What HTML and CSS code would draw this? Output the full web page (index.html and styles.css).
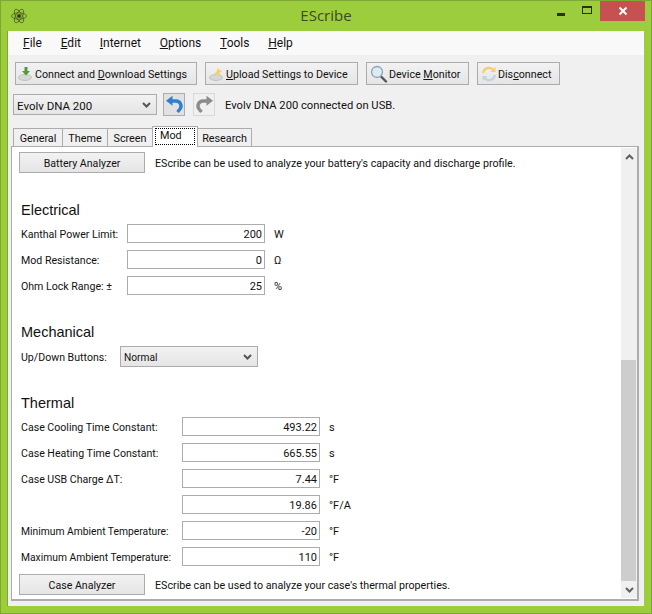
FILE: index.html
```html
<!DOCTYPE html>
<html lang="en">
<head>
    <meta charset="UTF-8">
    <title>EScribe</title>
    <link rel="stylesheet" href="styles.css">
</head>
<body>
<div class="window">
    <!-- title bar -->
    <div class="titlebar">
        <svg class="app-icon" width="18" height="18" viewBox="0 0 18 18" fill="none" stroke="#4a5a24" stroke-width=".8">
            <ellipse cx="9" cy="9" rx="7.5" ry="3.2"/>
            <ellipse cx="9" cy="9" rx="7.5" ry="3.2" transform="rotate(60 9 9)"/>
            <ellipse cx="9" cy="9" rx="7.5" ry="3.2" transform="rotate(120 9 9)"/>
            <circle cx="9" cy="9" r="2" fill="#33401a" stroke="none"/>
        </svg>
        <div class="title">EScribe</div>
        <div class="caption">
            <div class="cap-btn"><i class="min-icon"></i></div>
            <div class="cap-btn"><i class="max-icon"></i></div>
            <div class="cap-btn close">
                <svg width="10" height="10" viewBox="0 0 10 10" stroke="#fff" stroke-width="2"><path d="M1.5 1.5l7 7M8.5 1.5l-7 7"/></svg>
            </div>
        </div>
    </div>

    <div class="client">
        <!-- menu -->
        <div class="menu">
            <span class="menu-item"><u>F</u>ile</span>
            <span class="menu-item"><u>E</u>dit</span>
            <span class="menu-item"><u>I</u>nternet</span>
            <span class="menu-item"><u>O</u>ptions</span>
            <span class="menu-item"><u>T</u>ools</span>
            <span class="menu-item"><u>H</u>elp</span>
        </div>

        <!-- toolbar -->
        <div class="toolbar">
            <div class="btn btn-connect">
                <svg width="16" height="16" viewBox="0 0 16 16">
                    <ellipse cx="7" cy="11.5" rx="6.5" ry="3" fill="#d5d8d5" stroke="#a9aca9" stroke-width=".6"/>
                    <path d="M6.5 1h3v4h2.500l-4 4.500-4-4.500h2.500z" fill="#4f9d35"/>
                </svg>
                <span>Connect and <u>D</u>ownload Settings</span>
            </div>
            <div class="btn btn-upload">
                <svg width="16" height="16" viewBox="0 0 16 16">
                    <ellipse cx="7" cy="11.5" rx="6.5" ry="3" fill="#d5d8d5" stroke="#a9aca9" stroke-width=".6"/>
                    <path d="M8 9l-3-1 3-3V2.500l3 1.500 2 1-2 1.500-.5 2.500z" fill="#f3d36b"/>
                </svg>
                <span><u>U</u>pload Settings to Device</span>
            </div>
            <div class="btn btn-monitor">
                <svg width="18" height="18" viewBox="0 0 18 18">
                    <path d="M10.500 11l5.500 5.500" stroke="#555" stroke-width="2.400" stroke-linecap="round"/>
                    <circle cx="7" cy="7" r="5.500" fill="#dceaf5" stroke="#8aa3b8" stroke-width="1.300"/>
                </svg>
                <span>Device <u>M</u>onitor</span>
            </div>
            <div class="btn btn-disconnect">
                <svg width="16" height="16" viewBox="0 0 16 16" fill="none" stroke-width="2.200">
                    <path d="M2 7a6 6 0 0 1 10.500-3" stroke="#f6cd6b"/>
                    <path d="M14 9a6 6 0 0 1-10.500 3" stroke="#c3d2de"/>
                    <path d="M14.500 1v5h-5z" fill="#f6cd6b" stroke="none"/>
                    <path d="M1.500 15v-5h5z" fill="#c3d2de" stroke="none"/>
                </svg>
                <span>Dis<u>c</u>onnect</span>
            </div>
        </div>

        <!-- device row -->
        <div class="device-row">
            <div class="combo combo-device">
                <span>Evolv DNA 200</span>
                <svg class="chevron" width="9" height="6" viewBox="0 0 9 6" fill="none" stroke="#555" stroke-width="2"><path d="M1 1l3.500 3.500L8 1"/></svg>
            </div>
            <div class="icon-btn">
                <svg width="19" height="19" viewBox="0 0 19 19" fill="none">
                    <path d="M5 6h6a5 5 0 0 1 4 8l-2.500 3" stroke="#2f7fd0" stroke-width="3.400"/>
                    <path d="M7.500 .8v10L1 5.800z" fill="#2f7fd0"/>
                </svg>
            </div>
            <div class="icon-btn disabled">
                <svg width="19" height="19" viewBox="0 0 19 19" fill="none">
                    <path d="M14 6H8a5 5 0 0 0-4 8l2.500 3" stroke="#8c8c8c" stroke-width="3.400"/>
                    <path d="M11.500 .8v10L18 5.800z" fill="#8c8c8c"/>
                </svg>
            </div>
            <div class="status">Evolv DNA 200 connected on USB.</div>
        </div>

        <!-- tabs -->
        <div class="tabs">
            <div class="tab tab-general">General</div>
            <div class="tab tab-theme">Theme</div>
            <div class="tab tab-screen">Screen</div>
            <div class="tab tab-mod active"><span class="focus">Mod</span></div>
            <div class="tab tab-research">Research</div>
        </div>

        <div class="panel">
            <div class="content">
                <div class="analyzer">
                    <div class="btn btn-wide"><span>Battery Analyzer</span></div>
                    <span class="note">EScribe can be used to analyze your battery's capacity and discharge profile.</span>
                </div>

                <div class="heading">Electrical</div>
                <div class="form form-electrical">
                    <label>Kanthal Power Limit:</label><div class="field">200</div><span class="unit">W</span>
                    <label>Mod Resistance:</label><div class="field">0</div><span class="unit">Ω</span>
                    <label>Ohm Lock Range: ±</label><div class="field">25</div><span class="unit">%</span>
                </div>

                <div class="heading">Mechanical</div>
                <div class="buttons-row">
                    <label>Up/Down Buttons:</label>
                    <div class="combo combo-buttons">
                        <span>Normal</span>
                        <svg class="chevron" width="9" height="6" viewBox="0 0 9 6" fill="none" stroke="#555" stroke-width="2"><path d="M1 1l3.500 3.500L8 1"/></svg>
                    </div>
                </div>

                <div class="heading heading-thermal">Thermal</div>
                <div class="form form-thermal">
                    <label>Case Cooling Time Constant:</label><div class="field">493.22</div><span class="unit">s</span>
                    <label>Case Heating Time Constant:</label><div class="field">665.55</div><span class="unit">s</span>
                    <label>Case USB Charge ΔT:</label><div class="field">7.44</div><span class="unit">°F</span>
                    <label></label><div class="field">19.86</div><span class="unit">°F/A</span>
                    <label class="tight">Minimum Ambient Temperature:</label><div class="field">-20</div><span class="unit">°F</span>
                    <label class="tight">Maximum Ambient Temperature:</label><div class="field">110</div><span class="unit">°F</span>
                </div>

                <div class="analyzer analyzer-case">
                    <div class="btn btn-wide"><span>Case Analyzer</span></div>
                    <span class="note">EScribe can be used to analyze your case's thermal properties.</span>
                </div>
            </div>

            <div class="scrollbar">
                <div class="arrow">
                    <svg width="9" height="6" viewBox="0 0 9 6" fill="none" stroke="#606060" stroke-width="2"><path d="M1 5l3.500-3.500L8 5"/></svg>
                </div>
                <div class="track"><div class="thumb"></div></div>
                <div class="arrow">
                    <svg width="9" height="6" viewBox="0 0 9 6" fill="none" stroke="#606060" stroke-width="2"><path d="M1 1l3.500 3.500L8 1"/></svg>
                </div>
            </div>
        </div>
    </div>
</div>
</body>
</html>
```

FILE: styles.css
```css
html, body { margin: 0; height: 100%; }
body {
    font-family: Roboto, "Liberation Sans", Arial, sans-serif;
    font-size: 11px;
    color: #111;
    overflow: hidden;
}
u { text-underline-offset: 1px; }
label { white-space: nowrap; }

.window {
    box-sizing: border-box;
    width: 652px;
    height: 614px;
    display: flex;
    flex-direction: column;
    background: #9bcd3c;
    border: 1px solid #7ea832;
}

/* title bar */
.titlebar {
    height: 30px;
    flex: none;
    display: flex;
    align-items: flex-start;
    position: relative;
}
.app-icon { margin: 6px 0 0 9px; }
.title {
    position: absolute;
    left: 0;
    right: 0;
    top: 4px;
    text-align: center;
    font-family: "Open Sans", sans-serif;
    font-size: 15px;
    line-height: 20px;
    color: #3d4a22;
}
.caption { margin-left: auto; margin-right: 6px; display: flex; }
.cap-btn {
    width: 26px;
    height: 20px;
    display: flex;
    align-items: center;
    justify-content: center;
}
.cap-btn.close { width: 45px; background: #c75050; }
.min-icon { width: 8px; height: 3px; margin-top: 6px; background: #26301a; }
.max-icon {
    box-sizing: border-box;
    width: 10px;
    height: 8px;
    border: 1px solid #26301a;
    border-top-width: 2px;
    margin-top: -2px;
}

.client {
    flex: 1;
    margin: 0 7px 7px 6px;
    display: flex;
    flex-direction: column;
    background: #f0f0f0;
    border-left: 1px solid #7ea832;
}

/* menu */
.menu {
    height: 24px;
    background: #f9f9f9;
    display: flex;
    align-items: center;
    padding-left: 15px;
    gap: 18.800px;
    font-size: 12px;
}

/* buttons */
.toolbar { display: flex; gap: 8px; padding: 7px 0 0 7px; }
.btn {
    box-sizing: border-box;
    height: 23px;
    display: flex;
    align-items: center;
    gap: 1px;
    padding-left: 3px;
    background: linear-gradient(#f2f2f2, #e5e5e5);
    border: 1px solid #acacac;
    white-space: nowrap;
    font-size: 10.700px;
}
.btn span { padding-top: 2px; }
.btn-connect { width: 182px; padding-left: 2px; }
.btn-upload { width: 153px; }
.btn-monitor { width: 103px; }
.btn-disconnect { width: 83px; }
.btn-wide { width: 126px; height: 21px; padding-left: 0; justify-content: center; font-size: 10.600px; }

.device-row { display: flex; align-items: center; height: 23px; margin-top: 8px; padding-left: 5px; }
.combo {
    box-sizing: border-box;
    height: 21px;
    display: flex;
    align-items: center;
    justify-content: space-between;
    padding: 0 5px 0 3px;
    background: linear-gradient(#f2f2f2, #e5e5e5);
    border: 1px solid #acacac;
}
.combo span { padding-top: 2px; }
.combo-device { width: 144px; font-size: 11.500px; }
.combo-buttons { width: 138px; font-size: 10.200px; }
.icon-btn {
    box-sizing: border-box;
    width: 22px;
    height: 23px;
    margin-left: 8px;
    display: flex;
    align-items: center;
    justify-content: center;
    background: #e1e1e1;
    border: 1px solid #adadad;
}
.combo-device + .icon-btn { margin-left: 6px; }
.icon-btn.disabled { background: #f0f0f0; border-color: #d9d9d9; }
.status { margin-left: 10px; padding-top: 2px; font-size: 11.200px; }

/* tabs */
.tabs { display: flex; align-items: flex-end; height: 20px; margin-top: 10px; padding-left: 5px; font-size: 10.800px; }
.tab {
    box-sizing: border-box;
    height: 18px;
    padding-top: 2px;
    display: flex;
    align-items: center;
    justify-content: center;
    background: #f0f0f0;
    border: 1px solid #acacac;
    border-bottom: none;
    margin-right: -1px;
}
.tab-general { width: 50px; }
.tab-theme { width: 46px; }
.tab-screen { width: 46px; }
.tab-mod { width: 46px; }
.tab-research { width: 55px; }
.tab.active {
    height: 21px;
    margin-bottom: -1px;
    background: #fff;
    position: relative;
    z-index: 1;
    align-items: flex-start;
    padding-top: 1px;
}
.focus {
    box-sizing: border-box;
    width: 40px;
    height: 17px;
    padding-left: 5px;
    line-height: 15px;
    outline: 1px dotted #000;
    outline-offset: -1px;
}

/* tab page */
.panel {
    height: 455px;
    margin: 0 5px 5px 3px;
    box-sizing: border-box;
    display: flex;
    background: #fff;
    border: 1px solid #acacac;
    border-width: 1px 2px 2px 1px;
}
.content { flex: 1; padding: 5px 0 0 7px; min-width: 0; }
.analyzer { display: flex; align-items: center; gap: 10px; height: 21px; white-space: nowrap; }
.analyzer-case { margin-top: 8px; }
.note { font-size: 10.700px; padding-top: 2px; }
.heading {
    margin: 28px 0 5px 2px;
    height: 18px;
    line-height: 18px;
    font-family: "Liberation Sans", sans-serif;
    font-size: 14.500px;
}
.heading-thermal { margin-top: 27px; }
.form { display: grid; row-gap: 7px; align-items: center; margin-left: 2px; }
.form label, .buttons-row label { font-size: 10.600px; padding-top: 2px; }
.form label.tight { font-size: 10.300px; }
.form-electrical { grid-template-columns: 106px 138px auto; }
.form-thermal { grid-template-columns: 161px 138px auto; }
.field {
    box-sizing: border-box;
    height: 19px;
    line-height: 19px;
    padding-right: 2px;
    text-align: right;
    background: #fff;
    border: 1px solid #acacac;
}
.unit { padding: 2px 0 0 9px; }
.buttons-row { display: flex; align-items: center; height: 21px; margin-left: 2px; }
.buttons-row label { width: 99px; }

/* scrollbar */
.scrollbar { width: 16px; margin: 1px 0 1px; display: flex; flex-direction: column; background: #f0f0f0; }
.arrow { height: 17px; display: flex; align-items: center; justify-content: center; }
.track { flex: 1; display: flex; flex-direction: column; justify-content: flex-end; }
.thumb { height: 221px; width: 15px; background: #cdcdcd; }
```
